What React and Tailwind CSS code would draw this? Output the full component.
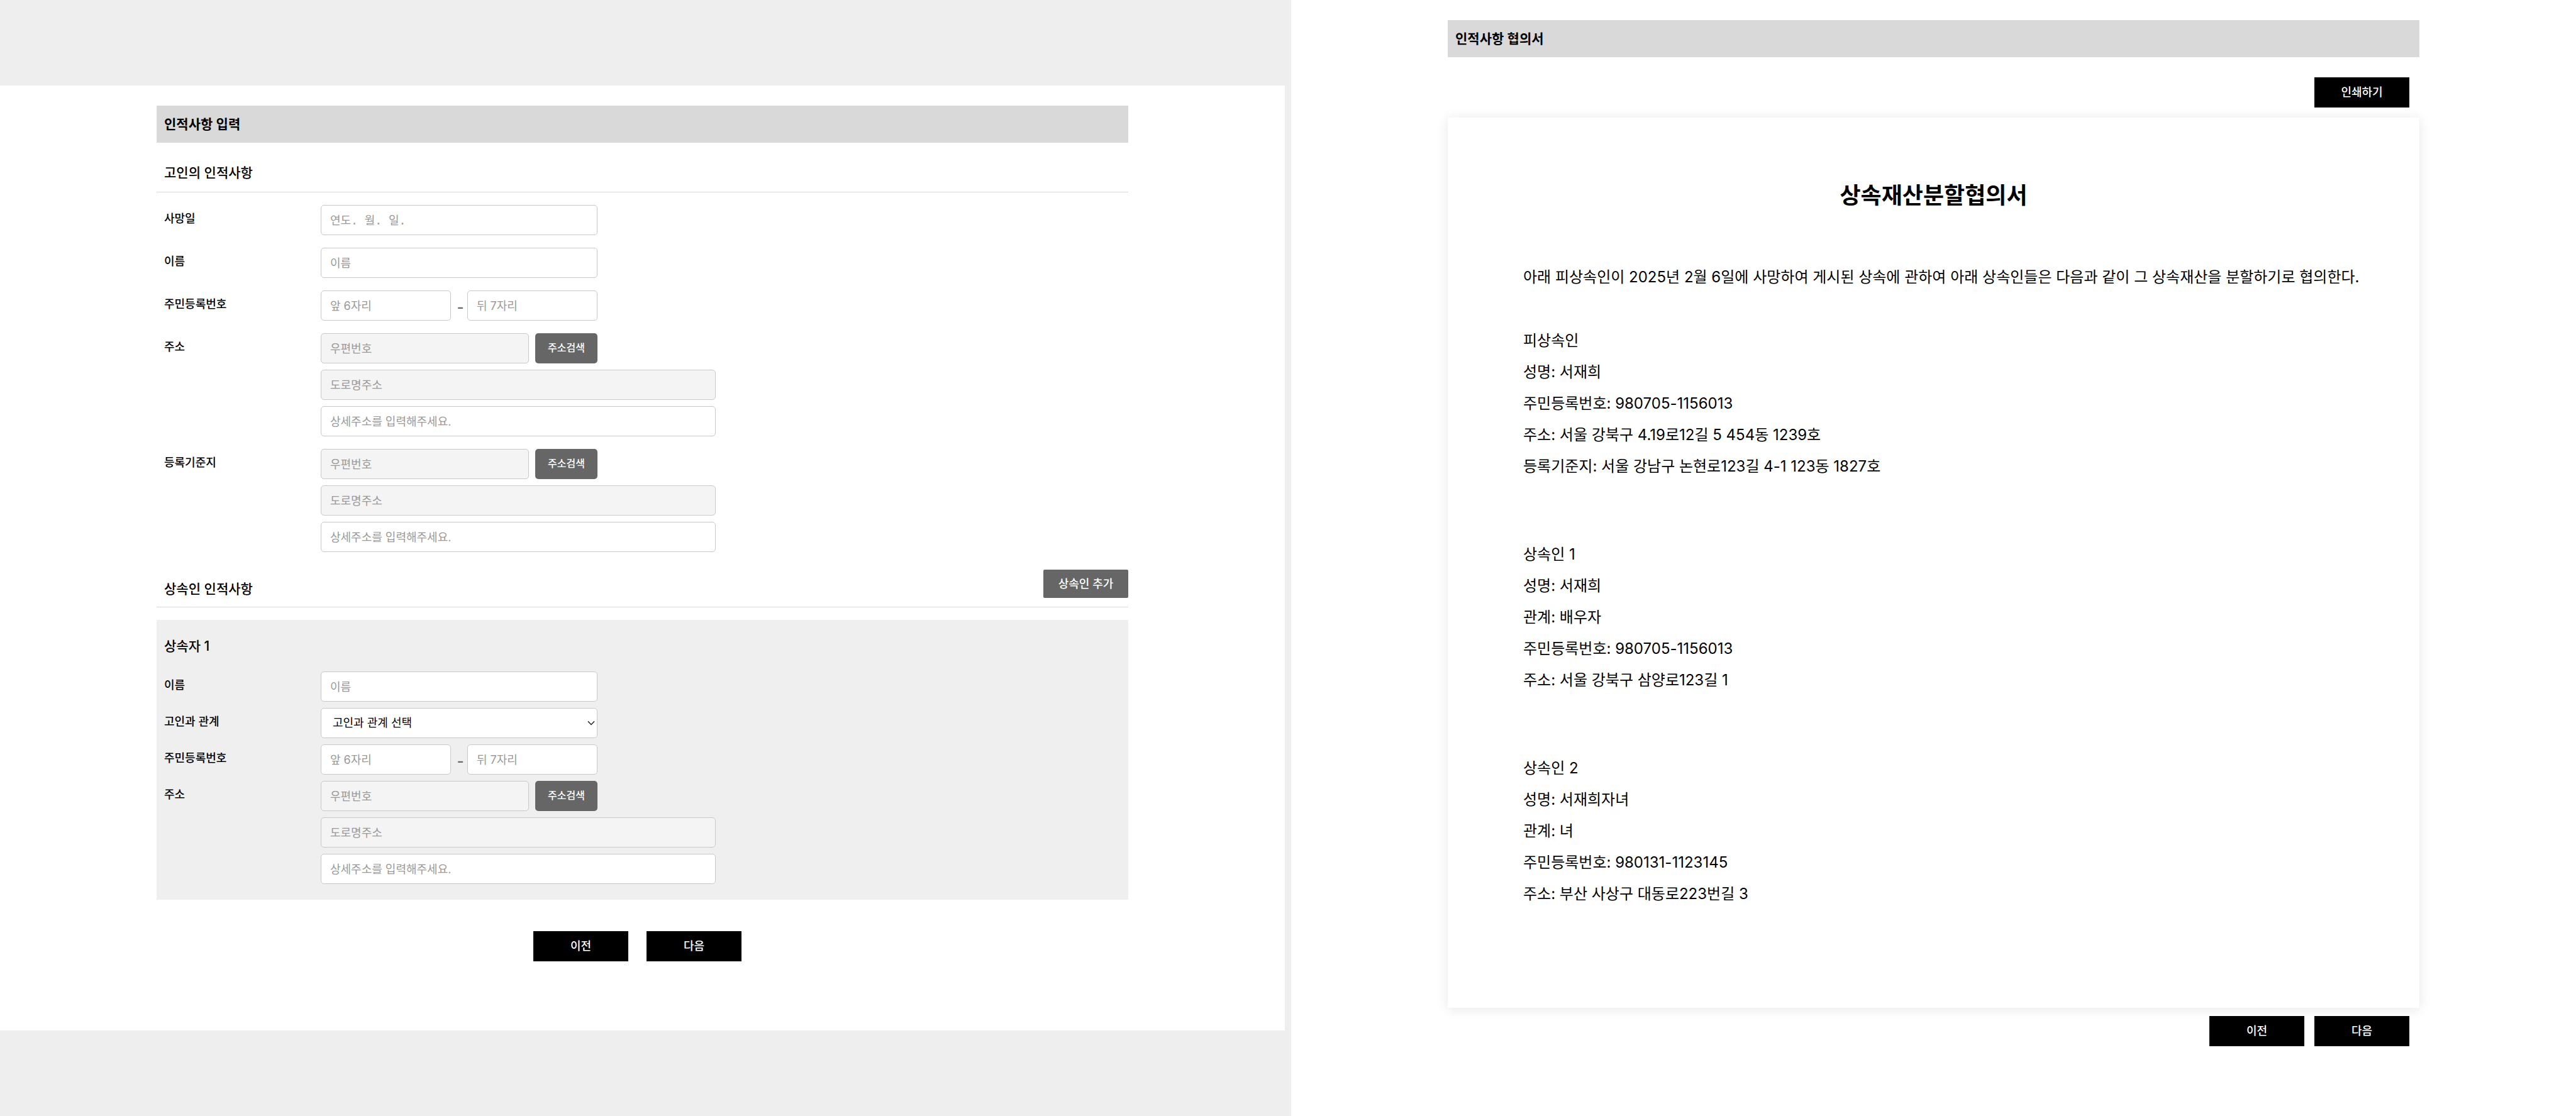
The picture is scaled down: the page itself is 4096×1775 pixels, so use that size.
import React from "react";

const FIELD =
  "block h-12 rounded-[5px] border border-[#c9c9c9] bg-white px-3.5 text-[18px] leading-6 text-black outline-none placeholder:text-[#999] read-only:bg-[#f4f4f4]";

function TitleBar({ children }) {
  return (
    <h1 className="bg-[#d9d9d9] px-3 py-3.5 text-[21px] leading-[31px] font-semibold">{children}</h1>
  );
}

function BlackButton({ children }) {
  return (
    <button type="button" className="h-12 w-[151px] bg-black text-[18px] leading-6 font-medium text-white">
      {children}
    </button>
  );
}

function Row({ label, htmlFor, children }) {
  return (
    <div className="flex items-start">
      <label htmlFor={htmlFor} className="w-[261px] shrink-0 pl-3 text-[18px] leading-[44px] font-medium">
        {label}
      </label>
      {children}
    </div>
  );
}

function NameField({ id }) {
  return (
    <Row label="이름" htmlFor={id}>
      <input id={id} type="text" placeholder="이름" className={`${FIELD} w-[440px]`} />
    </Row>
  );
}

function ResidentNumber({ id }) {
  return (
    <Row label="주민등록번호" htmlFor={id}>
      <div className="flex w-[440px] items-center">
        <input id={id} type="text" placeholder="앞 6자리" className={`${FIELD} w-0 grow`} />
        <span className="w-[26px] pt-1.5 pl-1 text-center text-[24px] leading-6 font-medium text-[#666]">-</span>
        <input type="text" aria-label="주민등록번호 뒤 7자리" placeholder="뒤 7자리" className={`${FIELD} w-0 grow`} />
      </div>
    </Row>
  );
}

function Address({ id, label }) {
  return (
    <Row label={label} htmlFor={id}>
      <div className="flex w-[628px] flex-col gap-2.5">
        <div className="flex w-[440px] gap-2.5">
          <input id={id} type="text" readOnly placeholder="우편번호" className={`${FIELD} w-0 grow`} />
          <button type="button" className="h-12 w-[99px] rounded-[5px] bg-[#666] pb-0.5 text-[16px] leading-6 font-medium text-white">
            주소검색
          </button>
        </div>
        <input type="text" readOnly aria-label={`${label} 도로명주소`} placeholder="도로명주소" className={`${FIELD} w-full`} />
        <input type="text" aria-label={`${label} 상세주소`} placeholder="상세주소를 입력해주세요." className={`${FIELD} w-full`} />
      </div>
    </Row>
  );
}

function Relation() {
  return (
    <Row label="고인과 관계" htmlFor="relation">
      <div className="relative w-[440px]">
        <select id="relation" className="block h-12 w-full appearance-none rounded-[5px] border border-[#c9c9c9] bg-white px-[18px] text-[18px] leading-6 text-black">
          <option>고인과 관계 선택</option>
        </select>
        <svg viewBox="0 0 12 8" className="pointer-events-none absolute top-5 right-1 h-2 w-3" fill="none" stroke="#222" strokeWidth="1.5">
          <path d="M1 1.2 6 6.4 11 1.2" />
        </svg>
      </div>
    </Row>
  );
}

function InputPanel() {
  return (
    <section className="flex flex-col bg-[#eee] py-[136px] pr-2.5">
      <div className="grow bg-white pt-8 pb-[110px]">
        <form className="mx-auto max-w-[1545px]">
          <TitleBar>인적사항 입력</TitleBar>
          <h2 className="border-b border-[#d9d9d9] px-3 pt-8 pb-[14px] text-[21px] leading-8 font-medium">고인의 인적사항</h2>
          <div className="flex flex-col gap-5 pt-5">
            <Row label="사망일" htmlFor="death-date">
              <input
                id="death-date"
                type="text"
                placeholder="연도. 월. 일."
                className={`${FIELD} w-[440px] font-['DejaVu_Sans_Mono','Noto_Sans_CJK_KR',monospace]`}
              />
            </Row>
            <NameField id="deceased-name" />
            <ResidentNumber id="deceased-number" />
            <Address id="deceased-address" label="주소" />
            <Address id="deceased-base" label="등록기준지" />
          </div>
          <div className="mt-7 flex h-[60px] items-start justify-between border-b border-[#d9d9d9] pl-3">
            <h2 className="pt-[15px] text-[21px] leading-8 font-medium">상속인 인적사항</h2>
            <button type="button" className="h-[45px] w-[135px] rounded-[2px] bg-[#666] text-[18px] leading-6 font-medium text-white">
              상속인 추가
            </button>
          </div>
          <div className="mt-5 bg-[#efefef] pt-[26px] pb-[25px]">
            <h3 className="mb-6 pl-3 text-[21px] leading-8 font-medium">상속자 1</h3>
            <div className="flex flex-col gap-2.5">
              <NameField id="heir-name" />
              <Relation />
              <ResidentNumber id="heir-number" />
              <Address id="heir-address" label="주소" />
            </div>
          </div>
          <div className="mt-[50px] flex justify-center gap-[29px] pr-4">
            <BlackButton>이전</BlackButton>
            <BlackButton>다음</BlackButton>
          </div>
        </form>
      </div>
    </section>
  );
}

const PEOPLE = [
  [
    "피상속인",
    "성명: 서재희",
    "주민등록번호: 980705-1156013",
    "주소: 서울 강북구 4.19로12길 5 454동 1239호",
    "등록기준지: 서울 강남구 논현로123길 4-1 123동 1827호",
  ],
  ["상속인 1", "성명: 서재희", "관계: 배우자", "주민등록번호: 980705-1156013", "주소: 서울 강북구 삼양로123길 1"],
  ["상속인 2", "성명: 서재희자녀", "관계: 녀", "주민등록번호: 980131-1123145", "주소: 부산 사상구 대동로223번길 3"],
];

function AgreementPanel() {
  return (
    <section className="bg-white pt-8">
      <div className="mx-auto max-w-[1545px]">
        <TitleBar>인적사항 협의서</TitleBar>
        <div className="mt-8 mb-4 flex justify-end pr-4">
          <BlackButton>인쇄하기</BlackButton>
        </div>
        <article className="bg-white px-[120px] pt-[100px] pb-[156px] text-[24px] leading-[50px] shadow-[0_2px_18px_rgba(0,0,0,0.1)]">
          <h2 className="mb-[81px] text-center text-[36px] leading-[48px] font-bold">상속재산분할협의서</h2>
          <p className="-mr-10">아래 피상속인이 2025년 2월 6일에 사망하여 게시된 상속에 관하여 아래 상속인들은 다음과 같이 그 상속재산을 분할하기로 협의한다.</p>
          <div className="mt-[51px] flex flex-col gap-[90px]">
            {PEOPLE.map((lines) => (
              <div key={lines[0]}>
                {lines.map((line) => (
                  <p key={line}>{line}</p>
                ))}
              </div>
            ))}
          </div>
        </article>
        <div className="mt-[13px] flex justify-end gap-4 pr-4">
          <BlackButton>이전</BlackButton>
          <BlackButton>다음</BlackButton>
        </div>
      </div>
    </section>
  );
}

export default function App() {
  return (
    <main lang="ko" className="grid min-h-screen grid-cols-[2053fr_2043fr] bg-white font-[Inter,'Noto_Sans_CJK_KR',sans-serif] text-black">
      <InputPanel />
      <AgreementPanel />
    </main>
  );
}
